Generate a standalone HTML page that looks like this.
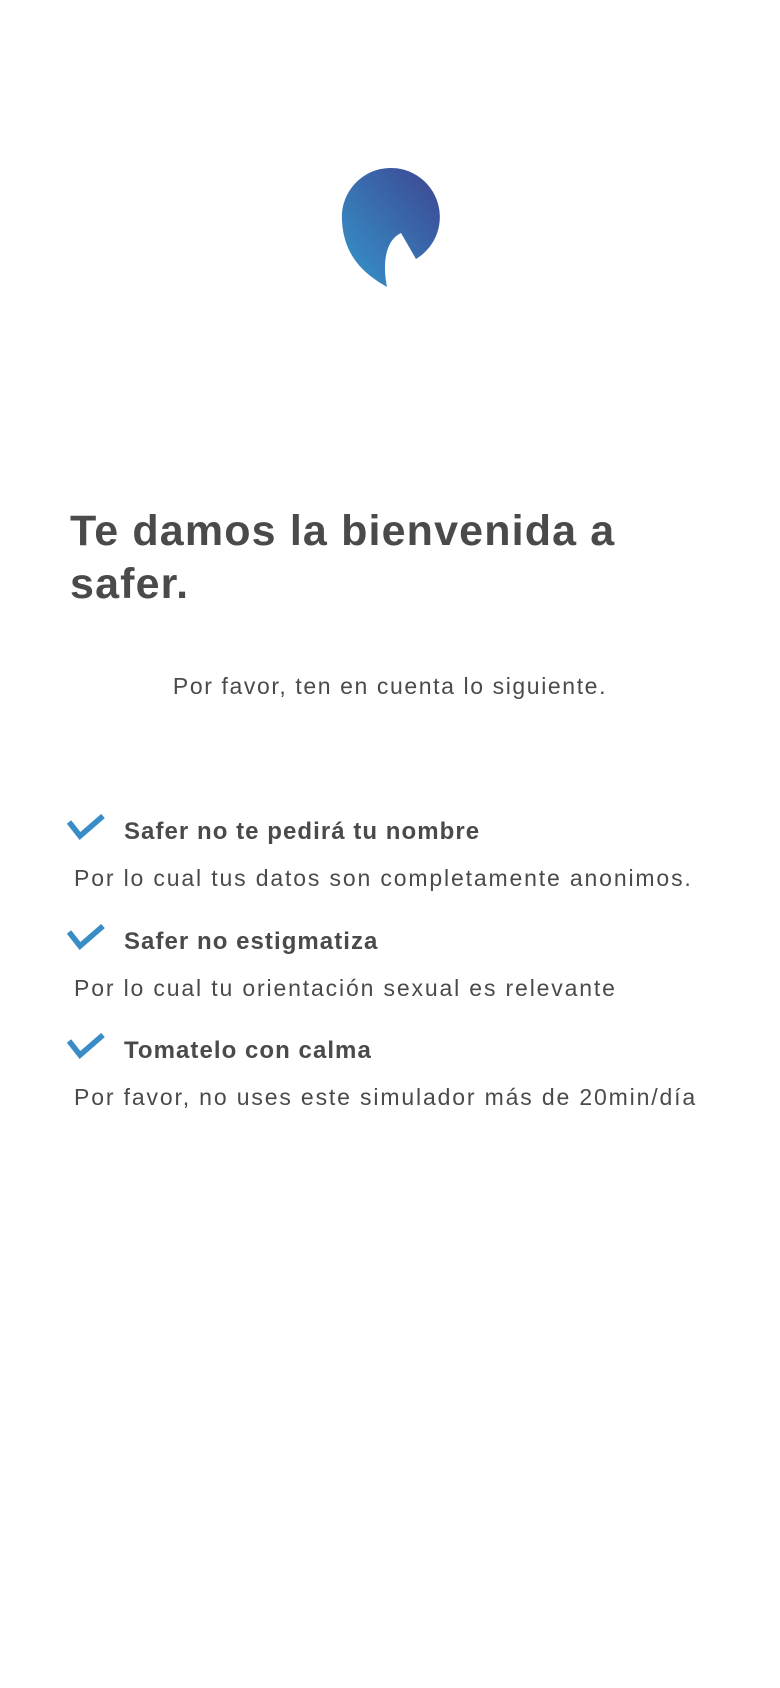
<!DOCTYPE html>
<html><head><meta charset="utf-8"><style>
body{margin:0;width:780px;height:1688px;background:#fff;font-family:"Liberation Sans",sans-serif;color:#4a4a4a;position:relative;overflow:hidden}
.a{position:absolute;white-space:nowrap}
h1{position:absolute;left:70px;top:505px;margin:0;font-size:43px;line-height:53px;font-weight:bold;color:#4a4a4a;letter-spacing:1.15px}
.sub{left:0;width:780px;text-align:center;top:673px;font-size:23px;letter-spacing:1.6px}
.h{left:124px;font-size:24px;font-weight:bold;letter-spacing:1.05px}
.d{left:74px;font-size:23px;letter-spacing:1.85px}
</style></head><body>
<svg class="a" style="left:0;top:4px" width="780" height="300">
<defs><linearGradient id="g" x1="0" y1="1" x2="1" y2="0"><stop offset="0" stop-color="#3596cc"/><stop offset="1" stop-color="#3d4591"/></linearGradient></defs>
<path d="M387,283 C368,272 344,255 342,217 A49,49 0 1 1 416,255 L401,229 C386,236 382,258 387,283 Z" fill="url(#g)"/>
</svg>
<svg class="a" style="left:66px;top:814px" width="42" height="30"><path d="M3,8 L14,22 L37,2" fill="none" stroke="#3a8cc6" stroke-width="5.5"/></svg>
<svg class="a" style="left:66px;top:924px" width="42" height="30"><path d="M3,8 L14,22 L37,2" fill="none" stroke="#3a8cc6" stroke-width="5.5"/></svg>
<svg class="a" style="left:66px;top:1033px" width="42" height="30"><path d="M3,8 L14,22 L37,2" fill="none" stroke="#3a8cc6" stroke-width="5.5"/></svg>
<h1>Te damos la bienvenida a<br>safer.</h1>
<div class="a sub">Por favor, ten en cuenta lo siguiente.</div>
<div class="a h" style="top:818px">Safer no te pedirá tu nombre</div>
<div class="a d" style="top:865px">Por lo cual tus datos son completamente anonimos.</div>
<div class="a h" style="top:928px">Safer no estigmatiza</div>
<div class="a d" style="top:975px">Por lo cual tu orientación sexual es relevante</div>
<div class="a h" style="top:1037px">Tomatelo con calma</div>
<div class="a d" style="top:1084px">Por favor, no uses este simulador más de 20min/día</div>
</body></html>
